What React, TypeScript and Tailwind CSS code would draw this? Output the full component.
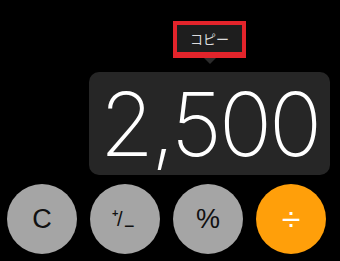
import React from "react";

export default function App() {
  return (
    <div className="w-[340px] h-[261px] bg-black overflow-hidden flex flex-col" style={{ fontFamily: "Inter, 'Noto Sans CJK JP', sans-serif" }}>
      <div className="ml-[89px] w-[241px] pt-[21px] flex flex-col items-center">
        <div className="border-[#e3242b] border-x-4 border-t-4 border-b-[6px] w-[73px] h-[37px] bg-[#1e1e1e] flex items-center justify-center">
          <span className="text-[13px] leading-none text-[#dcdcdc] font-['Noto_Sans_CJK_JP',sans-serif]">コピー</span>
        </div>
        <div className="w-0 h-0 border-l-[6px] border-r-[6px] border-t-[6px] border-l-transparent border-r-transparent border-t-[#2b2b2b]" />
        <div className="mt-[8px] w-[241px] h-[103px] rounded-[10px] bg-[#262626] flex items-center justify-center">
          <span className="text-[88px] leading-none font-extralight text-white tracking-[-3px] font-['Inter',sans-serif]">2,500</span>
        </div>
      </div>
      <div className="mt-[9px] ml-[7px] flex gap-[13px]">
        <div className="w-[70px] h-[70px] rounded-full bg-[#a5a5a5] flex items-center justify-center text-[#111] text-[27px] font-['Liberation_Sans',sans-serif]">C</div>
        <div className="w-[70px] h-[70px] rounded-full bg-[#a5a5a5] flex items-center justify-center text-[#111] font-['Liberation_Sans',sans-serif]">
          <span className="relative block w-[24px] h-[20px] ml-[-2px]">
            <span className="absolute left-0 top-[-1px] text-[11px] leading-none font-bold">+</span>
            <span className="absolute left-[5px] top-[0px] text-[20px] leading-none">/</span>
            <span className="absolute left-[12px] top-[8px] text-[18px] leading-none">−</span>
          </span>
        </div>
        <div className="w-[70px] h-[70px] rounded-full bg-[#a5a5a5] flex items-center justify-center text-[#111] text-[27px] font-['Liberation_Sans',sans-serif]">%</div>
        <div className="w-[70px] h-[70px] rounded-full bg-[#ff9f0a] flex items-center justify-center text-white text-[34px] font-['Liberation_Sans',sans-serif]">÷</div>
      </div>
    </div>
  );
}
